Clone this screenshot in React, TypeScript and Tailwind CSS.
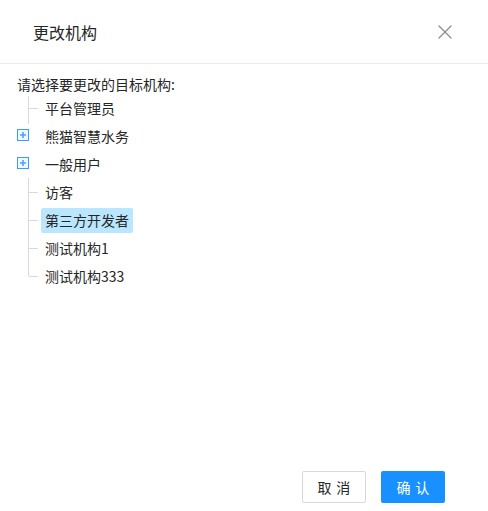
import { X } from 'lucide-react';

const font = { fontFamily: '"Noto Sans CJK SC", "Noto Sans", sans-serif' };

type Node = { name: string; kind: 'leaf' | 'plus'; selected?: boolean; last?: boolean; first?: boolean };

const nodes: Node[] = [
  { name: '平台管理员', kind: 'leaf', first: true },
  { name: '熊猫智慧水务', kind: 'plus' },
  { name: '一般用户', kind: 'plus' },
  { name: '访客', kind: 'leaf' },
  { name: '第三方开发者', kind: 'leaf', selected: true },
  { name: '测试机构1', kind: 'leaf' },
  { name: '测试机构333', kind: 'leaf', last: true },
];

function Switcher({ node }: { node: Node }) {
  if (node.kind === 'plus') {
    return (
      <div className="relative h-[28px] w-[28px] shrink-0">
        <div className="absolute left-0 top-[7px] flex h-[12px] w-[12px] items-center justify-center border border-[#3d9bff] bg-[#eef6ff]">
          <svg width="8" height="8" viewBox="0 0 8 8">
            <path d="M4 1v6M1 4h6" stroke="#4aa3ff" strokeWidth="1.6" />
          </svg>
        </div>
      </div>
    );
  }
  return (
    <div className="relative h-[28px] w-[28px] shrink-0">
      <div
        className={
          'absolute left-[11px] w-px bg-[#d9d9d9] ' +
          (node.first ? 'top-[2px] h-[28px]' : node.last ? 'top-0 h-[14px]' : 'top-0 h-[28px]')
        }
      />
      <div className="absolute left-[12px] top-[14px] h-px w-[9px] bg-[#d9d9d9]" />
    </div>
  );
}

export default function App() {
  return (
    <div className="flex h-[511px] w-[488px] flex-col bg-white text-[#262626]" style={font}>
      <div className="flex h-[64px] items-center justify-between border-b border-[#ebebeb] pl-[33px] pr-[31px]">
        <span className="text-[16px] leading-[22px]">更改机构</span>
        <X className="h-[24px] w-[24px] text-[#8c8c8c]" strokeWidth={1.3} />
      </div>
      <div className="flex-1 pl-[17px] pt-[10px]">
        <div className="text-[14px] leading-[20px]">请选择要更改的目标机构:</div>
        <div>
          {nodes.map((n) => (
            <div key={n.name} className="flex h-[28px] items-center">
              <Switcher node={n} />
              <span
                className={
                  'ml-[-4px] rounded-[2px] px-[4px] text-[14px] leading-[25px] ' +
                  (n.selected ? 'bg-[#bae7ff]' : '')
                }
              >
                {n.name}
              </span>
            </div>
          ))}
        </div>
      </div>
      <div className="flex justify-end gap-[15px] pb-[8px] pr-[43px]">
        <button className="flex h-[32px] w-[64px] items-center justify-center rounded-[2px] border border-[#d9d9d9] bg-white text-[14px]">
          <span className="mr-[-0.34em] tracking-[0.34em]">取消</span>
        </button>
        <button className="flex h-[32px] w-[64px] items-center justify-center rounded-[2px] bg-[#1890ff] text-[14px] text-white">
          <span className="mr-[-0.34em] tracking-[0.34em]">确认</span>
        </button>
      </div>
    </div>
  );
}
